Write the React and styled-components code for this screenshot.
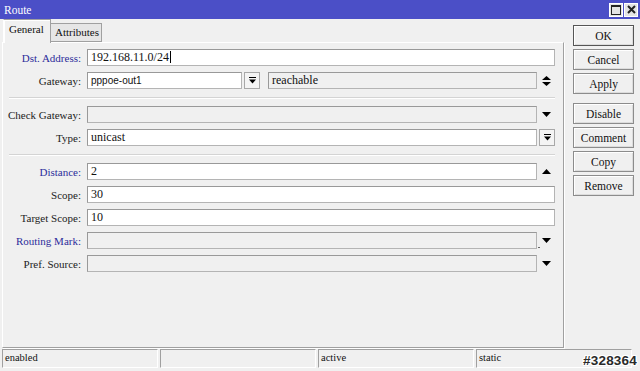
import React from "react";
import styled, { createGlobalStyle } from "styled-components";

const Global = createGlobalStyle`
  html, body { margin: 0; padding: 0; background: #f0f0f0; }
  body { font-family: "Liberation Serif", "Times New Roman", serif; }
  * { box-sizing: border-box; }
`;

const Window = styled.div`
  position: relative;
  width: 640px;
  height: 371px;
  background: #f0f0f0;
  display: flex;
  flex-direction: column;
  overflow: hidden;
`;

const TitleBar = styled.div`
  height: 19px;
  flex: none;
  background: #4b4fc7;
  display: flex;
  align-items: center;
  justify-content: space-between;
  padding: 0 2px 0 4px;
  color: #fff;
  font-size: 11.5px;
`;

const TitleButtons = styled.div`
  display: flex;
  gap: 1px;
`;

const TitleBtn = styled.div`
  width: 14px;
  height: 14px;
  background: #e4e4e4;
  border: 1px solid #fff;
  display: flex;
  align-items: center;
  justify-content: center;
`;

const Body = styled.div`
  flex: 1;
  display: flex;
  min-height: 0;
`;

const LeftCol = styled.div`
  width: 562px;
  margin-left: 2px;
  display: flex;
  flex-direction: column;
`;

const TabRow = styled.div`
  height: 23px;
  display: flex;
  align-items: flex-end;
  padding-left: 1px;
  position: relative;
  z-index: 1;
`;

const Tab = styled.div`
  height: ${(p) => (p.$active ? 24 : 19)}px;
  width: ${(p) => p.$w}px;
  margin-bottom: ${(p) => (p.$active ? -1 : 0)}px;
  border: 1px solid #a0a0a0;
  border-bottom: ${(p) => (p.$active ? "none" : "1px solid #a0a0a0")};
  border-left: ${(p) => (p.$active ? "1px solid #fff" : "none")};
  background: ${(p) => (p.$active ? "#f0f0f0" : "#e6e6e6")};
  font-size: 11px;
  padding: ${(p) => (p.$active ? "3px 0 0 5px" : "2px 0 0 4px")};
  color: #111;
  box-shadow: ${(p) => (p.$active ? "inset 1px 1px 0 #fff" : "none")};
`;

const Panel = styled.div`
  flex: 1;
  margin-bottom: 1px;
  border: 1px solid #a0a0a0;
  border-left-color: #fff;
  border-top-color: #fff;
  box-shadow: 1px 1px 0 #fff;
  padding: 6px 8px 0 0;
  display: flex;
  flex-direction: column;
  gap: 6px;
`;

const Row = styled.div`
  display: flex;
  align-items: center;
  height: 17px;
`;

const Label = styled.div`
  width: 78px;
  margin-right: 6px;
  text-align: right;
  font-size: 11px;
  color: ${(p) => (p.$blue ? "#2d2d9b" : "#222")};
  white-space: nowrap;
`;

const Field = styled.div`
  height: 17px;
  flex: ${(p) => (p.$w ? "none" : 1)};
  width: ${(p) => (p.$w ? `${p.$w}px` : "auto")};
  background: ${(p) => (p.$disabled ? "#f0f0f0" : "#fff")};
  border: 1px solid #b4b4b4;
  border-top-color: #999;
  border-left-color: #999;
  padding: 0 3px;
  font-size: ${(p) => (p.$sans ? "10px" : "12px")};
  font-family: ${(p) =>
    p.$sans ? '"Liberation Sans", Arial, sans-serif' : '"Liberation Serif", serif'};
  line-height: 15px;
  color: #111;
  white-space: nowrap;
  overflow: hidden;
`;

const Caret = styled.span`
  display: inline-block;
  width: 1px;
  height: 12px;
  background: #000;
  vertical-align: -2px;
  margin-left: 1px;
`;

const Slot = styled.div`
  width: 18px;
  flex: none;
  display: flex;
  align-items: center;
  justify-content: center;
  position: relative;
`;

const Tick = styled.span`
  position: absolute;
  left: 1px;
  top: 9px;
  width: 2px;
  height: 1px;
  background: #666;
`;

const SmallBtn = styled.div`
  width: 16px;
  height: 17px;
  flex: none;
  margin-left: ${(p) => p.$ml || 0}px;
  margin-right: ${(p) => p.$mr || 0}px;
  border: 1px solid #a8a8a8;
  background: #f4f4f4;
  display: flex;
  align-items: center;
  justify-content: center;
`;

const Separator = styled.div`
  height: 1px;
  margin: 2px 0 2px 6px;
  background: #d4d4d4;
  box-shadow: 0 1px 0 #fff;
`;

const RightCol = styled.div`
  width: 61px;
  margin-left: 9px;
  padding-top: 6px;
  display: flex;
  flex-direction: column;
  gap: 3px;
`;

const Button = styled.div`
  height: 21px;
  border: 1px solid ${(p) => (p.$default ? "#555" : "#8c8c8c")};
  box-shadow: inset 1px 1px 0 #fff, inset -1px -1px 0 #dcdcdc;
  background: #f0f0f0;
  display: flex;
  align-items: center;
  justify-content: center;
  font-size: 11.5px;
  color: #111;
  margin-top: ${(p) => p.$gapTop || 0}px;
`;

const StatusBar = styled.div`
  height: 19px;
  margin: 0 0 3px 2px;
  display: flex;
  gap: 2px;
  flex: none;
`;

const StatusCell = styled.div`
  width: 156px;
  border: 1px solid #a0a0a0;
  border-right-color: #fff;
  border-bottom-color: #fff;
  font-size: 10.5px;
  padding: 2px 0 0 2px;
  color: #111;
`;

const Watermark = styled.div`
  position: absolute;
  right: 3px;
  bottom: 3px;
  font-family: "Liberation Sans", Arial, sans-serif;
  font-weight: bold;
  font-size: 13.5px;
  color: #2a2a2a;
  letter-spacing: 0.2px;
  text-shadow: 1px 0 0 #fff, -1px 0 0 #fff, 0 1px 0 #fff, 0 -1px 0 #fff,
    1px 1px 0 #fff, -1px -1px 0 #fff, 1px -1px 0 #fff, -1px 1px 0 #fff;
`;

const Down = () => (
  <svg width="9" height="5" viewBox="0 0 9 5">
    <polygon points="0,0 9,0 4.5,5" fill="#000" />
  </svg>
);
const Up = () => (
  <svg width="9" height="5" viewBox="0 0 9 5">
    <polygon points="0,5 9,5 4.5,0" fill="#000" />
  </svg>
);
const UpDown = () => (
  <svg width="9" height="10" viewBox="0 0 9 10">
    <polygon points="0,4 9,4 4.5,0" fill="#000" />
    <polygon points="0,6 9,6 4.5,10" fill="#000" />
  </svg>
);
const BarDown = () => (
  <svg width="7" height="7" viewBox="0 0 7 7">
    <rect x="0" y="0" width="7" height="1" fill="#000" />
    <polygon points="0,2.5 7,2.5 3.5,6.5" fill="#000" />
  </svg>
);

export default function App() {
  return (
    <Window>
      <Global />
      <TitleBar>
        <span>Route</span>
        <TitleButtons>
          <TitleBtn>
            <svg width="10" height="10" viewBox="0 0 10 10">
              <rect x="0.5" y="0.5" width="9" height="9" fill="none" stroke="#222" />
              <rect x="0.5" y="0.5" width="9" height="1.5" fill="#222" />
            </svg>
          </TitleBtn>
          <TitleBtn>
            <svg width="9" height="9" viewBox="0 0 9 9">
              <path d="M1 1 L8 8 M8 1 L1 8" stroke="#222" strokeWidth="2" />
            </svg>
          </TitleBtn>
        </TitleButtons>
      </TitleBar>
      <Body>
        <LeftCol>
          <TabRow>
            <Tab $active $w={48}>General</Tab>
            <Tab $w={51}>Attributes</Tab>
          </TabRow>
          <Panel>
            <Row>
              <Label $blue>Dst. Address:</Label>
              <Field>
                192.168.11.0/24
                <Caret />
              </Field>
            </Row>
            <Row>
              <Label>Gateway:</Label>
              <Field $w={155} $sans>
                pppoe-out1
              </Field>
              <SmallBtn $ml={2} $mr={8}>
                <BarDown />
              </SmallBtn>
              <Field $disabled>reachable</Field>
              <Slot>
                <UpDown />
              </Slot>
            </Row>
            <Separator />
            <Row>
              <Label>Check Gateway:</Label>
              <Field $disabled />
              <Slot>
                <Down />
              </Slot>
            </Row>
            <Row>
              <Label>Type:</Label>
              <Field>unicast</Field>
              <SmallBtn $ml={2}>
                <BarDown />
              </SmallBtn>
            </Row>
            <Separator />
            <Row>
              <Label $blue>Distance:</Label>
              <Field>2</Field>
              <Slot>
                <Up />
              </Slot>
            </Row>
            <Row>
              <Label>Scope:</Label>
              <Field>30</Field>
            </Row>
            <Row>
              <Label>Target Scope:</Label>
              <Field>10</Field>
            </Row>
            <Row>
              <Label $blue>Routing Mark:</Label>
              <Field $disabled />
              <Slot>
                <Tick />
                <Down />
              </Slot>
            </Row>
            <Row>
              <Label>Pref. Source:</Label>
              <Field $disabled />
              <Slot>
                <Down />
              </Slot>
            </Row>
          </Panel>
        </LeftCol>
        <RightCol>
          <Button $default>OK</Button>
          <Button>Cancel</Button>
          <Button>Apply</Button>
          <Button $gapTop={6}>Disable</Button>
          <Button>Comment</Button>
          <Button>Copy</Button>
          <Button>Remove</Button>
        </RightCol>
      </Body>
      <StatusBar>
        <StatusCell>enabled</StatusCell>
        <StatusCell />
        <StatusCell>active</StatusCell>
        <StatusCell>static</StatusCell>
      </StatusBar>
      <Watermark>#328364</Watermark>
    </Window>
  );
}
